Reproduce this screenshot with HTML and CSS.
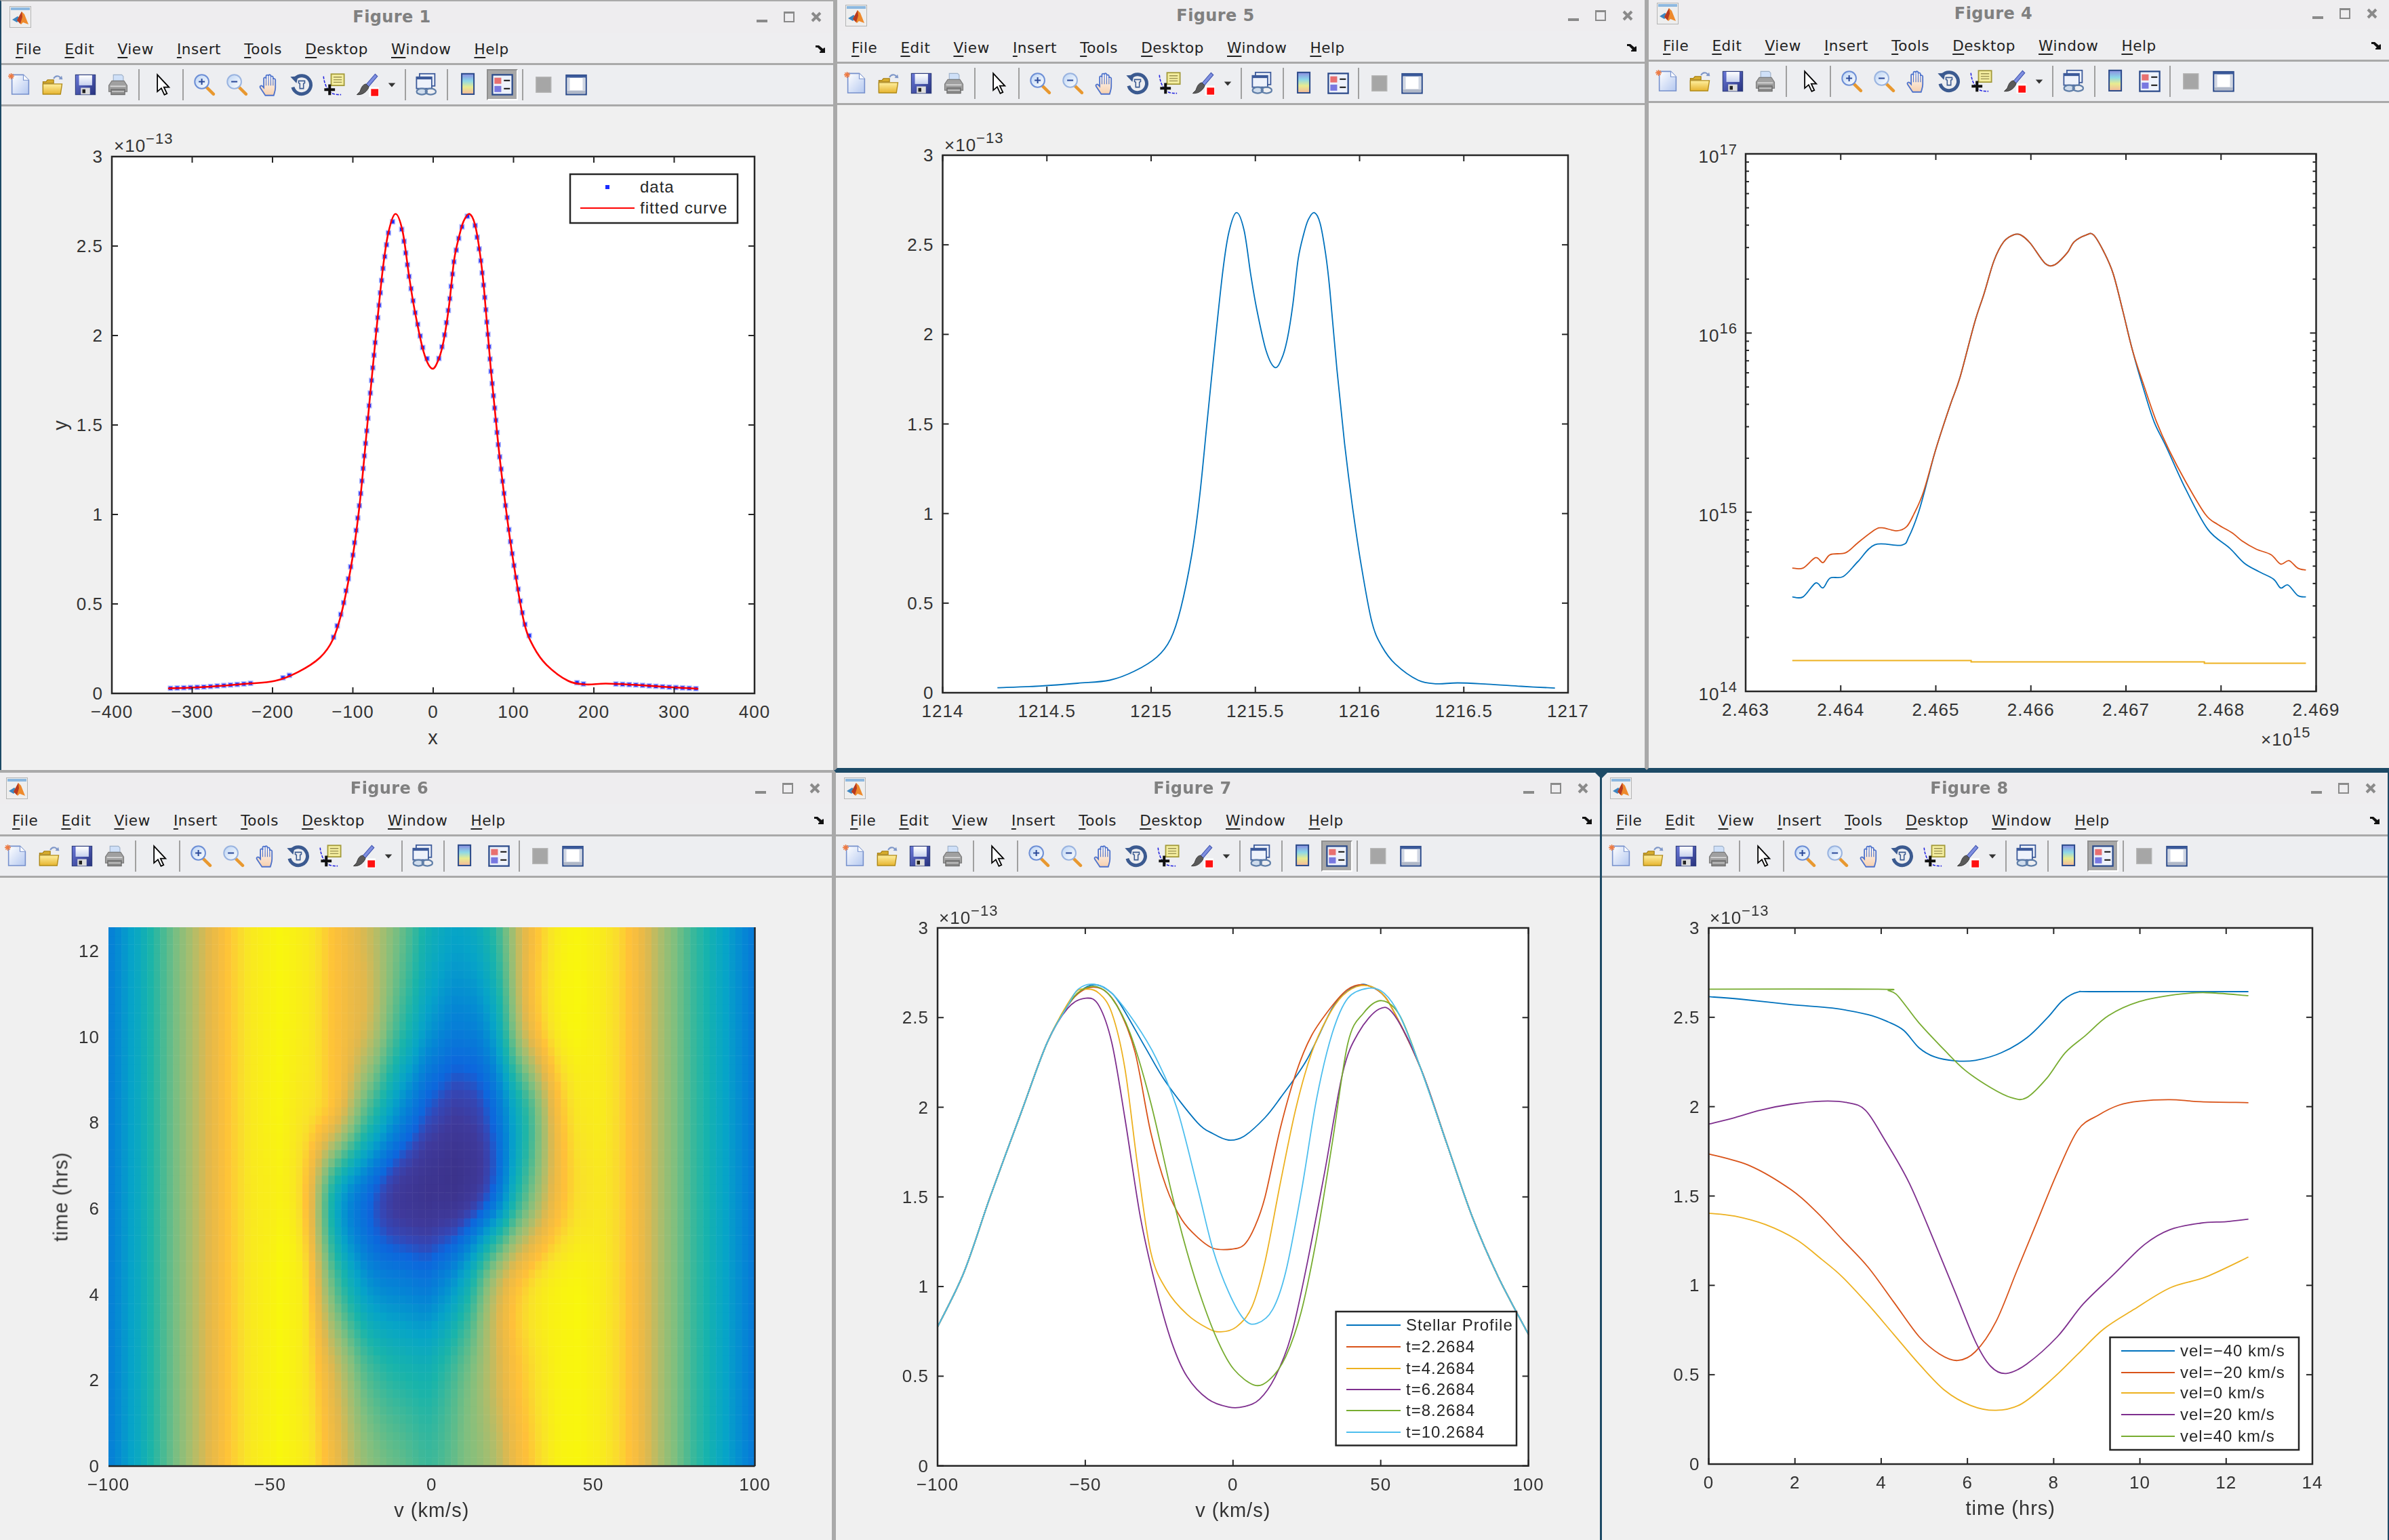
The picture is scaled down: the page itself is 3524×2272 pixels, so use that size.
FILE: index.html
```html
<!DOCTYPE html>
<html lang="en">
<head>
  <meta charset="UTF-8">
  <title>MATLAB figures</title>
  <link rel="stylesheet" href="styles.css">
</head>
<body>
  <!-- shared toolbar and window icons, drawn on a 16 unit grid -->
  <svg class="defs" aria-hidden="true">
    <defs>
      <linearGradient id="g-page" x1="0" y1="0" x2="1" y2="1"><stop offset="0" stop-color="#ffffff"/><stop offset="1" stop-color="#b4c8f0"/></linearGradient>
      <linearGradient id="g-folder" x1="0" y1="0" x2="0" y2="1"><stop offset="0" stop-color="#fff0a0"/><stop offset="1" stop-color="#e6b430"/></linearGradient>
      <linearGradient id="g-disk" x1="0" y1="0" x2="1" y2="1"><stop offset="0" stop-color="#6a78d8"/><stop offset="1" stop-color="#27327e"/></linearGradient>
      <linearGradient id="g-label" x1="0" y1="0" x2="0" y2="1"><stop offset="0" stop-color="#ffffff"/><stop offset="1" stop-color="#c8d2ee"/></linearGradient>
      <linearGradient id="g-lens" x1="0" y1="0" x2="1" y2="1"><stop offset="0" stop-color="#bcd4f4"/><stop offset="1" stop-color="#ffffff"/></linearGradient>
      <linearGradient id="g-hand" x1="0" y1="0" x2="0" y2="1"><stop offset="0" stop-color="#ffffff"/><stop offset="1" stop-color="#f6cfae"/></linearGradient>
      <linearGradient id="g-bar" x1="0" y1="0" x2="0" y2="1"><stop offset="0" stop-color="#8a8ce0"/><stop offset=".35" stop-color="#8cd8e8"/><stop offset=".65" stop-color="#e8ec90"/><stop offset="1" stop-color="#f4b89a"/></linearGradient>

      <symbol id="matlab" viewBox="0 0 32 32">
        <rect x=".5" y=".5" width="31" height="31" fill="#eeeeee" stroke="#b4b4b4"/>
        <rect x="2" y="2" width="28" height="4" fill="#8cb8e0"/>
        <path d="M4 20l8-5 5 4-6 5z" fill="#3d85c0"/>
        <path d="M18 8l-7 13 6 6 3-3 8 3-6-15z" fill="#ee8a2c"/>
        <path d="M18 8l-7 13 5 5 3-10z" fill="#b83a20"/>
      </symbol>
      <symbol id="i-undock" viewBox="0 0 14 14">
        <path d="M0 2h5l6 5 1.500-1.500H14V13H6v-1.500l2-1.500-5-5H0z" fill="#111"/>
      </symbol>
      <symbol id="i-close" viewBox="0 0 16 16">
        <path d="M2 2l12 12M14 2L2 14" stroke="#8a8a8a" stroke-width="4"/>
      </symbol>
      <symbol id="i-new" viewBox="0 0 16 16">
        <path d="M2.500 1.500H10L13.500 5v9.200H2.500z" fill="url(#g-page)" stroke="#7690cc" stroke-width=".7"/>
        <path d="M10 1.500V5h3.500" fill="#ffffff" stroke="#7690cc" stroke-width=".5"/>
        <path d="M2 .4v4M0 2.400h4M.6 1l2.800 2.800M3.400 1L.6 3.800" stroke="#ee7a42" stroke-width=".7"/>
      </symbol>
      <symbol id="i-open" viewBox="0 0 16 16">
        <path d="M1.500 14V6h2l1-1.200h4V7h-7" fill="#d6ac2e" stroke="#a07a10" stroke-width=".5"/>
        <path d="M1.500 7.500h12.500l-1 6.700H1.500z" fill="url(#g-folder)" stroke="#b08a18" stroke-width=".6"/>
        <path d="M8.500 4C9.500 2 12 1.800 13 3.700" fill="none" stroke="#7f97c8" stroke-width=".9"/>
        <path d="M11.800 4.400l2.600.2-.6-2.500z" fill="#7f97c8"/>
      </symbol>
      <symbol id="i-save" viewBox="0 0 16 16">
        <rect x="1.500" y="1.500" width="13" height="13" fill="url(#g-disk)" stroke="#2b3a7a" stroke-width=".5"/>
        <rect x="3.800" y="1.800" width="8.600" height="6.600" fill="url(#g-label)"/>
        <rect x="5" y="10" width="6" height="4.400" fill="#dddddd"/>
        <rect x="6" y="11" width="2" height="2.500" fill="#222222"/>
      </symbol>
      <symbol id="i-print" viewBox="0 0 16 16">
        <path d="M5 5.500V1.500h5.500l1 1v3z" fill="#cfe0f8" stroke="#9db0c8" stroke-width=".5"/>
        <path d="M2 8.500l2-3h8l2 3v4H2z" fill="#a0a0a0" stroke="#7a7a7a" stroke-width=".5"/>
        <rect x="3.500" y="11" width="9" height="3.500" fill="#8a8a8a" stroke="#686868" stroke-width=".5"/>
        <path d="M3 9h10M4 12.500h8" stroke="#dddddd" stroke-width=".6"/>
      </symbol>
      <symbol id="i-arrow" viewBox="0 0 16 16">
        <path d="M4.500 1.500v11l2.600-2.200 2 4.300 1.700-.8-2-4.200h3.300z" fill="#ffffff" stroke="#000000" stroke-width=".8"/>
      </symbol>
      <symbol id="i-zoomin" viewBox="0 0 16 16">
        <path d="M9.800 9.800l4.400 4.400" stroke="#e8982f" stroke-width="2" stroke-linecap="round"/>
        <circle cx="6.500" cy="6" r="4.600" fill="url(#g-lens)" stroke="#6d8fd6" stroke-width=".9"/>
        <path d="M4.500 6h4M6.500 4v4" stroke="#2c4a9a" stroke-width=".9"/>
      </symbol>
      <symbol id="i-zoomout" viewBox="0 0 16 16">
        <path d="M9.800 9.800l4.400 4.400" stroke="#e8982f" stroke-width="2" stroke-linecap="round"/>
        <circle cx="6.500" cy="6" r="4.600" fill="url(#g-lens)" stroke="#9ab4e0" stroke-width=".9"/>
        <path d="M4.500 6h4" stroke="#2c4a9a" stroke-width=".9"/>
      </symbol>
      <symbol id="i-hand" viewBox="0 0 16 16">
        <path d="M5.500 15L2.200 10C1.600 8.800 2.800 8.200 3.600 9l.9 1V4c0-1 1.400-1 1.500 0V2.400c0-1 1.500-1 1.600 0V2.200c0-1 1.400-1 1.500 0V3c0-.8 1.400-.8 1.500.2v1.400c0-.8 1.400-.8 1.500.2V10c0 2-.6 3.200-1.100 5z" fill="url(#g-hand)" stroke="#4d72cc" stroke-width=".8"/>
        <path d="M6 4v4.500M7.600 2.500v6M9.100 3v5.500M10.600 4.500v4" stroke="#4d72cc" stroke-width=".5" fill="none"/>
      </symbol>
      <symbol id="i-rotate" viewBox="0 0 16 16">
        <path d="M3.600 4A6 6 0 1 1 2.200 9.600" fill="none" stroke="#3b5a90" stroke-width="2.200"/>
        <path d="M.6 2.800l5-.4-1 4.600z" fill="#3b5a90"/>
        <path d="M6 5.500h4v1.400l-.8.3v3.300H6.800V7.200L6 6.900z" fill="none" stroke="#3b5a90" stroke-width=".7"/>
      </symbol>
      <symbol id="i-tip" viewBox="0 0 16 16">
        <path d="M1 2.500c.3 4 2 8 4 10s5 2 7.500 2" fill="none" stroke="#2020e0" stroke-width=".7" stroke-dasharray="1.800 .8"/>
        <rect x="6" y="1" width="8.500" height="7.500" fill="#f4eea0" stroke="#a39a3a" stroke-width=".8"/>
        <path d="M7.500 3h5.500M7.500 4.700h5.500M7.500 6.400h5.500" stroke="#999050" stroke-width=".6"/>
        <path d="M1.500 11.200h7M5 7.800v7" stroke="#111111" stroke-width="1.800"/>
      </symbol>
      <symbol id="i-brush" viewBox="0 0 16 16">
        <path d="M13.500 1L7.500 8 9 9.500l6-7z" fill="#7f8fe0" stroke="#4055b0" stroke-width=".5"/>
        <path d="M7.500 7.500C5 8 4.500 10 3.500 12.500L1.500 14.500c3 .3 6-1 8-5z" fill="#5a5a5a" stroke="#333333" stroke-width=".4"/>
        <rect x="9.500" y="9.500" width="6.500" height="6.500" fill="#ffffff"/>
        <rect x="10.800" y="10.800" width="4.800" height="4.600" fill="#ff1010"/>
      </symbol>
      <symbol id="i-drop" viewBox="0 0 16 16">
        <path d="M2 5h12l-6 7z" fill="#333333"/>
      </symbol>
      <symbol id="i-link" viewBox="0 0 16 16">
        <rect x="3.500" y=".8" width="10" height="8" fill="#eef2fb" stroke="#3c5a9a" stroke-width=".8"/>
        <rect x="1.500" y="3" width="10" height="7.500" fill="#eef2fb" stroke="#3c5a9a" stroke-width=".8"/>
        <rect x="1.500" y="3" width="10" height="1.500" fill="#3c5a9a"/>
        <ellipse cx="5" cy="12.500" rx="3.400" ry="2" fill="#cfdcec" stroke="#5f7ea8" stroke-width="1"/>
        <ellipse cx="10.800" cy="12.500" rx="3.400" ry="2" fill="none" stroke="#5f7ea8" stroke-width="1"/>
      </symbol>
      <symbol id="i-bar" viewBox="0 0 16 16">
        <rect x="3.600" y=".8" width="8" height="13.400" fill="url(#g-bar)" stroke="#2b4a8a" stroke-width=".9"/>
      </symbol>
      <symbol id="i-legend" viewBox="0 0 16 16">
        <rect x="1.500" y="1.500" width="13" height="13" fill="#eef2fb" stroke="#2b4a8a" stroke-width="1"/>
        <rect x="2.800" y="3.400" width="4.500" height="4" fill="#e87070"/>
        <rect x="2.800" y="8.800" width="4.500" height="4" fill="#7878e0"/>
        <path d="M9 5.200h4M9 10.600h4" stroke="#111111" stroke-width=".9"/>
      </symbol>
      <symbol id="i-hide" viewBox="0 0 16 16">
        <rect x="3" y="3" width="9.800" height="10" fill="#a6a6a6" stroke="#b4b4b4" stroke-width=".6"/>
      </symbol>
      <symbol id="i-dock" viewBox="0 0 16 16">
        <rect x="1.500" y="1.800" width="13" height="12.600" fill="#ffffff" stroke="#2b4a8a" stroke-width="1"/>
        <rect x="1.500" y="1.800" width="13" height="1.600" fill="#3b5a9a"/>
        <rect x="2" y="11.800" width="12" height="2.200" fill="#b0b8c8"/>
        <rect x="2" y="3.400" width="1.800" height="8.400" fill="#d0d6e2"/>
        <rect x="12.200" y="3.400" width="1.800" height="8.400" fill="#d0d6e2"/>
      </symbol>
    </defs>
  </svg>

  <main class="desktop">
    <div class="row">
      <section class="win win-first">
        <header class="titlebar">
          <svg class="logo"><use href="#matlab"/></svg>
          <h2>Figure 1</h2>
          <div class="wm"><i class="wm-min"></i><i class="wm-max"></i><svg class="wm-close"><use href="#i-close"/></svg></div>
        </header>
        <nav class="menubar">
          <a><u>F</u>ile</a><a><u>E</u>dit</a><a><u>V</u>iew</a><a><u>I</u>nsert</a><a><u>T</u>ools</a><a><u>D</u>esktop</a><a><u>W</u>indow</a><a><u>H</u>elp</a>
          <svg class="undock"><use href="#i-undock"/></svg>
        </nav>
        <div class="toolbar">
          <span class="tool"><svg><use href="#i-new"/></svg></span><span class="tool"><svg><use href="#i-open"/></svg></span><span class="tool"><svg><use href="#i-save"/></svg></span><span class="tool"><svg><use href="#i-print"/></svg></span>
          <b class="sep"></b>
          <span class="tool tool-arrow"><svg><use href="#i-arrow"/></svg></span>
          <b class="sep"></b>
          <span class="tool"><svg><use href="#i-zoomin"/></svg></span><span class="tool"><svg><use href="#i-zoomout"/></svg></span><span class="tool"><svg><use href="#i-hand"/></svg></span><span class="tool"><svg><use href="#i-rotate"/></svg></span><span class="tool"><svg><use href="#i-tip"/></svg></span><span class="tool"><svg><use href="#i-brush"/></svg></span><span class="tool tool-drop"><svg><use href="#i-drop"/></svg></span>
          <b class="sep"></b>
          <span class="tool"><svg><use href="#i-link"/></svg></span>
          <b class="sep"></b>
          <span class="tool"><svg><use href="#i-bar"/></svg></span><span class="tool tool-legend on"><svg><use href="#i-legend"/></svg></span>
          <b class="sep"></b>
          <span class="tool"><svg><use href="#i-hide"/></svg></span><span class="tool"><svg><use href="#i-dock"/></svg></span>
        </div>
        <svg class="figure" id="fig1"></svg>
      </section>

      <section class="win win-5">
        <header class="titlebar">
          <svg class="logo"><use href="#matlab"/></svg>
          <h2>Figure 5</h2>
          <div class="wm"><i class="wm-min"></i><i class="wm-max"></i><svg class="wm-close"><use href="#i-close"/></svg></div>
        </header>
        <nav class="menubar">
          <a><u>F</u>ile</a><a><u>E</u>dit</a><a><u>V</u>iew</a><a><u>I</u>nsert</a><a><u>T</u>ools</a><a><u>D</u>esktop</a><a><u>W</u>indow</a><a><u>H</u>elp</a>
          <svg class="undock"><use href="#i-undock"/></svg>
        </nav>
        <div class="toolbar">
          <span class="tool"><svg><use href="#i-new"/></svg></span><span class="tool"><svg><use href="#i-open"/></svg></span><span class="tool"><svg><use href="#i-save"/></svg></span><span class="tool"><svg><use href="#i-print"/></svg></span>
          <b class="sep"></b>
          <span class="tool tool-arrow"><svg><use href="#i-arrow"/></svg></span>
          <b class="sep"></b>
          <span class="tool"><svg><use href="#i-zoomin"/></svg></span><span class="tool"><svg><use href="#i-zoomout"/></svg></span><span class="tool"><svg><use href="#i-hand"/></svg></span><span class="tool"><svg><use href="#i-rotate"/></svg></span><span class="tool"><svg><use href="#i-tip"/></svg></span><span class="tool"><svg><use href="#i-brush"/></svg></span><span class="tool tool-drop"><svg><use href="#i-drop"/></svg></span>
          <b class="sep"></b>
          <span class="tool"><svg><use href="#i-link"/></svg></span>
          <b class="sep"></b>
          <span class="tool"><svg><use href="#i-bar"/></svg></span><span class="tool tool-legend"><svg><use href="#i-legend"/></svg></span>
          <b class="sep"></b>
          <span class="tool"><svg><use href="#i-hide"/></svg></span><span class="tool"><svg><use href="#i-dock"/></svg></span>
        </div>
        <svg class="figure" id="fig5"></svg>
      </section>

      <section class="win win-4">
        <header class="titlebar">
          <svg class="logo"><use href="#matlab"/></svg>
          <h2>Figure 4</h2>
          <div class="wm"><i class="wm-min"></i><i class="wm-max"></i><svg class="wm-close"><use href="#i-close"/></svg></div>
        </header>
        <nav class="menubar">
          <a><u>F</u>ile</a><a><u>E</u>dit</a><a><u>V</u>iew</a><a><u>I</u>nsert</a><a><u>T</u>ools</a><a><u>D</u>esktop</a><a><u>W</u>indow</a><a><u>H</u>elp</a>
          <svg class="undock"><use href="#i-undock"/></svg>
        </nav>
        <div class="toolbar">
          <span class="tool"><svg><use href="#i-new"/></svg></span><span class="tool"><svg><use href="#i-open"/></svg></span><span class="tool"><svg><use href="#i-save"/></svg></span><span class="tool"><svg><use href="#i-print"/></svg></span>
          <b class="sep"></b>
          <span class="tool tool-arrow"><svg><use href="#i-arrow"/></svg></span>
          <b class="sep"></b>
          <span class="tool"><svg><use href="#i-zoomin"/></svg></span><span class="tool"><svg><use href="#i-zoomout"/></svg></span><span class="tool"><svg><use href="#i-hand"/></svg></span><span class="tool"><svg><use href="#i-rotate"/></svg></span><span class="tool"><svg><use href="#i-tip"/></svg></span><span class="tool"><svg><use href="#i-brush"/></svg></span><span class="tool tool-drop"><svg><use href="#i-drop"/></svg></span>
          <b class="sep"></b>
          <span class="tool"><svg><use href="#i-link"/></svg></span>
          <b class="sep"></b>
          <span class="tool"><svg><use href="#i-bar"/></svg></span><span class="tool tool-legend"><svg><use href="#i-legend"/></svg></span>
          <b class="sep"></b>
          <span class="tool"><svg><use href="#i-hide"/></svg></span><span class="tool"><svg><use href="#i-dock"/></svg></span>
        </div>
        <svg class="figure" id="fig4"></svg>
      </section>
    </div>

    <div class="row row-lower">
      <section class="win win-6">
        <header class="titlebar">
          <svg class="logo"><use href="#matlab"/></svg>
          <h2>Figure 6</h2>
          <div class="wm"><i class="wm-min"></i><i class="wm-max"></i><svg class="wm-close"><use href="#i-close"/></svg></div>
        </header>
        <nav class="menubar">
          <a><u>F</u>ile</a><a><u>E</u>dit</a><a><u>V</u>iew</a><a><u>I</u>nsert</a><a><u>T</u>ools</a><a><u>D</u>esktop</a><a><u>W</u>indow</a><a><u>H</u>elp</a>
          <svg class="undock"><use href="#i-undock"/></svg>
        </nav>
        <div class="toolbar">
          <span class="tool"><svg><use href="#i-new"/></svg></span><span class="tool"><svg><use href="#i-open"/></svg></span><span class="tool"><svg><use href="#i-save"/></svg></span><span class="tool"><svg><use href="#i-print"/></svg></span>
          <b class="sep"></b>
          <span class="tool tool-arrow"><svg><use href="#i-arrow"/></svg></span>
          <b class="sep"></b>
          <span class="tool"><svg><use href="#i-zoomin"/></svg></span><span class="tool"><svg><use href="#i-zoomout"/></svg></span><span class="tool"><svg><use href="#i-hand"/></svg></span><span class="tool"><svg><use href="#i-rotate"/></svg></span><span class="tool"><svg><use href="#i-tip"/></svg></span><span class="tool"><svg><use href="#i-brush"/></svg></span><span class="tool tool-drop"><svg><use href="#i-drop"/></svg></span>
          <b class="sep"></b>
          <span class="tool"><svg><use href="#i-link"/></svg></span>
          <b class="sep"></b>
          <span class="tool"><svg><use href="#i-bar"/></svg></span><span class="tool tool-legend"><svg><use href="#i-legend"/></svg></span>
          <b class="sep"></b>
          <span class="tool"><svg><use href="#i-hide"/></svg></span><span class="tool"><svg><use href="#i-dock"/></svg></span>
        </div>
        <svg class="figure" id="fig6"></svg>
      </section>

      <section class="win win-7">
        <i class="notch"></i>
        <header class="titlebar">
          <svg class="logo"><use href="#matlab"/></svg>
          <h2>Figure 7</h2>
          <div class="wm"><i class="wm-min"></i><i class="wm-max"></i><svg class="wm-close"><use href="#i-close"/></svg></div>
        </header>
        <nav class="menubar">
          <a><u>F</u>ile</a><a><u>E</u>dit</a><a><u>V</u>iew</a><a><u>I</u>nsert</a><a><u>T</u>ools</a><a><u>D</u>esktop</a><a><u>W</u>indow</a><a><u>H</u>elp</a>
          <svg class="undock"><use href="#i-undock"/></svg>
        </nav>
        <div class="toolbar">
          <span class="tool"><svg><use href="#i-new"/></svg></span><span class="tool"><svg><use href="#i-open"/></svg></span><span class="tool"><svg><use href="#i-save"/></svg></span><span class="tool"><svg><use href="#i-print"/></svg></span>
          <b class="sep"></b>
          <span class="tool tool-arrow"><svg><use href="#i-arrow"/></svg></span>
          <b class="sep"></b>
          <span class="tool"><svg><use href="#i-zoomin"/></svg></span><span class="tool"><svg><use href="#i-zoomout"/></svg></span><span class="tool"><svg><use href="#i-hand"/></svg></span><span class="tool"><svg><use href="#i-rotate"/></svg></span><span class="tool"><svg><use href="#i-tip"/></svg></span><span class="tool"><svg><use href="#i-brush"/></svg></span><span class="tool tool-drop"><svg><use href="#i-drop"/></svg></span>
          <b class="sep"></b>
          <span class="tool"><svg><use href="#i-link"/></svg></span>
          <b class="sep"></b>
          <span class="tool"><svg><use href="#i-bar"/></svg></span><span class="tool tool-legend on"><svg><use href="#i-legend"/></svg></span>
          <b class="sep"></b>
          <span class="tool"><svg><use href="#i-hide"/></svg></span><span class="tool"><svg><use href="#i-dock"/></svg></span>
        </div>
        <svg class="figure" id="fig7"></svg>
      </section>

      <section class="win win-8">
        <header class="titlebar">
          <svg class="logo"><use href="#matlab"/></svg>
          <h2>Figure 8</h2>
          <div class="wm"><i class="wm-min"></i><i class="wm-max"></i><svg class="wm-close"><use href="#i-close"/></svg></div>
        </header>
        <nav class="menubar">
          <a><u>F</u>ile</a><a><u>E</u>dit</a><a><u>V</u>iew</a><a><u>I</u>nsert</a><a><u>T</u>ools</a><a><u>D</u>esktop</a><a><u>W</u>indow</a><a><u>H</u>elp</a>
          <svg class="undock"><use href="#i-undock"/></svg>
        </nav>
        <div class="toolbar">
          <span class="tool"><svg><use href="#i-new"/></svg></span><span class="tool"><svg><use href="#i-open"/></svg></span><span class="tool"><svg><use href="#i-save"/></svg></span><span class="tool"><svg><use href="#i-print"/></svg></span>
          <b class="sep"></b>
          <span class="tool tool-arrow"><svg><use href="#i-arrow"/></svg></span>
          <b class="sep"></b>
          <span class="tool"><svg><use href="#i-zoomin"/></svg></span><span class="tool"><svg><use href="#i-zoomout"/></svg></span><span class="tool"><svg><use href="#i-hand"/></svg></span><span class="tool"><svg><use href="#i-rotate"/></svg></span><span class="tool"><svg><use href="#i-tip"/></svg></span><span class="tool"><svg><use href="#i-brush"/></svg></span><span class="tool tool-drop"><svg><use href="#i-drop"/></svg></span>
          <b class="sep"></b>
          <span class="tool"><svg><use href="#i-link"/></svg></span>
          <b class="sep"></b>
          <span class="tool"><svg><use href="#i-bar"/></svg></span><span class="tool tool-legend on"><svg><use href="#i-legend"/></svg></span>
          <b class="sep"></b>
          <span class="tool"><svg><use href="#i-hide"/></svg></span><span class="tool"><svg><use href="#i-dock"/></svg></span>
        </div>
        <svg class="figure" id="fig8"></svg>
      </section>
    </div>
  </main>

  <script src="plots.js"></script>
</body>
</html>
```

FILE: styles.css
```css
html, body {
  margin: 0;
  width: 3524px;
  height: 2272px;
  overflow: hidden;
  background-color: #1d4a66;
}

.defs {
  position: absolute;
  width: 0;
  height: 0;
}

.desktop {
  display: flex;
  flex-direction: column;
  filter: blur(0.6px);
}

.row {
  display: flex;
  height: 1136px;
}

.row-lower {
  padding-top: 2px;
}

/* Windows */
.win {
  position: relative;
  display: flex;
  flex-direction: column;
  box-sizing: border-box;
  background-color: #f0f0f0;
  border: solid #a9a9a9;
  border-width: 2px 3px 0 3px;
}

.win-first { width: 1232px; border-left: 2px solid #1d4a66; }
.win-5 { width: 1197px; margin-top: -2px; border-bottom: 3px solid #1d4a66; }
.win-4 { width: 1095px; margin-top: -5px; border-right: none; border-bottom: 3px solid #1d4a66; }
.win-6 { width: 1236px; margin-top: -2px; margin-left: -6px; border-top-width: 4px; }
.win-7 { width: 1133px; margin-top: -2px; border-top: 4px solid #1d4a66; border-right: 3px solid #1d4a66; }
.win-8 { width: 1159px; margin-top: -2px; border-top: 4px solid #1d4a66; border-left: none; border-right: none; }

.notch {
  position: absolute;
  top: -2px;
  right: -13px;
  border: solid transparent;
  border-width: 11px 11px 0;
  border-top-color: #1d4a66;
  z-index: 2;
}

/* Title bar */
.titlebar {
  display: flex;
  align-items: center;
  height: 46px;
  padding: 0 17px 0 12px;
  background-color: #eeedef;
}

.logo {
  width: 32px;
  height: 32px;
  flex: none;
}

.titlebar h2 {
  flex: 1;
  margin: 0;
  padding-right: 6px;
  text-align: center;
  font: bold 24px "DejaVu Sans", sans-serif;
  letter-spacing: 0.4px;
  color: #808080;
}

.wm {
  display: flex;
  align-items: flex-end;
  gap: 24px;
  height: 16px;
}

.wm-min {
  width: 16px;
  height: 4px;
  background-color: #8a8a8a;
}

.wm-max {
  box-sizing: border-box;
  width: 16px;
  height: 16px;
  border: 2px solid #8a8a8a;
  border-top-width: 3px;
}

.wm-close {
  width: 16px;
  height: 16px;
}

/* Menu bar */
.menubar {
  display: flex;
  align-items: center;
  gap: 34px;
  height: 42px;
  padding: 3px 12px 0 21px;
  background-color: #eeeef0;
  border-bottom: 3px solid #a9a9a9;
  font: 21.5px "DejaVu Sans", sans-serif;
  letter-spacing: 0.6px;
  color: #222222;
}

.menubar u {
  text-decoration-thickness: 2px;
  text-underline-offset: 4px;
}

.undock {
  width: 14px;
  height: 14px;
  margin-left: auto;
}

/* Tool bar */
.toolbar {
  display: flex;
  align-items: center;
  height: 58px;
  padding-left: 4px;
  background-color: #edeef1;
  border-bottom: 3px solid #a9a9a9;
}

.tool {
  display: flex;
  align-items: center;
  justify-content: center;
  flex: none;
  width: 48px;
  height: 46px;
}

.tool svg {
  width: 36px;
  height: 36px;
}

.tool-arrow {
  width: 46px;
  margin-left: 5px;
}

.tool-drop {
  width: 26px;
}

.tool-drop svg {
  width: 14px;
  height: 14px;
}

.tool-legend {
  box-sizing: border-box;
  width: 46px;
  margin-left: 3px;
  border: 2px solid transparent;
}

.tool-legend.on {
  background-color: #a8a8a8;
  border-color: #8f8f8f #ffffff #ffffff #8f8f8f;
}

.sep {
  flex: none;
  width: 2px;
  height: 46px;
  margin: 0 6px;
  background-color: #a0a0a0;
}

/* Plots */
.figure {
  display: block;
  flex: 1;
  width: 100%;
  min-height: 0;
}

.figure text {
  font: 26px "Liberation Sans", Arial, sans-serif;
  letter-spacing: 1px;
  fill: #333333;
}

.figure text.label {
  font-size: 29px;
}

.figure text.key {
  font-size: 24px;
  fill: #262626;
}

.figure tspan.sup {
  font-size: 22px;
}
```

FILE: plots.js
```javascript
const NS = 'http://www.w3.org/2000/svg';
const INK = '#262626';
const BLUE = '#0072bd', ORANGE = '#d95319', YELLOW = '#edb120',
      PURPLE = '#7e2f8e', GREEN = '#77ac30', CYAN = '#4dbeee';

const add = (parent, tag, attrs, text) => {
  const node = document.createElementNS(NS, tag);
  Object.keys(attrs).forEach(key => node.setAttribute(key, attrs[key]));
  if (text !== undefined) node.textContent = text;
  parent.appendChild(node);
  return node;
};

const range = (from, to, step) => {
  const out = [];
  for (let i = 0; from + i * step <= to + 1e-9; i++) out.push(from + i * step);
  return out;
};

const minus = value => String(value).replace('-', '\u2212');

// Catmull-Rom through the traced points
const smoothPath = pts => {
  let d = `M${pts[0][0].toFixed(1)} ${pts[0][1].toFixed(1)}`;
  for (let i = 0; i < pts.length - 1; i++) {
    const p0 = pts[Math.max(i - 1, 0)], p1 = pts[i], p2 = pts[i + 1], p3 = pts[Math.min(i + 2, pts.length - 1)];
    const c1 = [p1[0] + (p2[0] - p0[0]) / 6, p1[1] + (p2[1] - p0[1]) / 6];
    const c2 = [p2[0] - (p3[0] - p1[0]) / 6, p2[1] - (p3[1] - p1[1]) / 6];
    d += `C${c1[0].toFixed(1)} ${c1[1].toFixed(1)} ${c2[0].toFixed(1)} ${c2[1].toFixed(1)} ${p2[0].toFixed(1)} ${p2[1].toFixed(1)}`;
  }
  return d;
};

// Draws one axes in page coordinates. draw(ax) paints the data between background and frame.
const plot = (id, cfg, draw) => {
  const svg = document.getElementById(id);
  const rect = svg.getBoundingClientRect();
  svg.setAttribute('viewBox', `${rect.left} ${rect.top} ${rect.width} ${rect.height}`);
  const [left, top, right, bottom] = cfg.box;
  const ax = {
    svg,
    X: f => left + f * (right - left),
    Y: f => bottom - f * (bottom - top),
    fx: x => (x - cfg.xlim[0]) / (cfg.xlim[1] - cfg.xlim[0]),
    fy: y => (y - cfg.ylim[0]) / (cfg.ylim[1] - cfg.ylim[0]),
  };
  ax.line = (fracs, color, width = 1.800) => add(svg, 'path', {
    d: smoothPath(fracs.map(p => [ax.X(p[0]), ax.Y(p[1])])), fill: 'none', stroke: color, 'stroke-width': width,
  });

  add(svg, 'rect', { x: left, y: top, width: right - left, height: bottom - top, fill: '#ffffff' });
  draw(ax);

  const seg = (x1, y1, x2, y2, width = 2) => add(svg, 'line', { x1, y1, x2, y2, stroke: INK, 'stroke-width': width });

  if (cfg.heat) {
    seg(left, bottom, right, bottom, 2.500);
    seg(right, top, right, bottom, 2.500);
  } else {
    add(svg, 'rect', { x: left, y: top, width: right - left, height: bottom - top, fill: 'none', stroke: INK, 'stroke-width': 2.500 });
    cfg.xticks.forEach(x => {
      const px = ax.X(ax.fx(x));
      seg(px, bottom, px, bottom - 9);
      seg(px, top, px, top + 9);
    });
    cfg.yticks.forEach(y => {
      const py = ax.Y(ax.fy(y));
      seg(left, py, left + 9, py);
      seg(right, py, right - 9, py);
    });
    (cfg.minor || []).forEach(y => {
      const py = ax.Y(ax.fy(y));
      seg(left, py, left + 5, py);
      seg(right, py, right - 5, py);
    });
  }

  cfg.xticks.forEach(x => {
    add(svg, 'text', { x: ax.X(ax.fx(x)), y: bottom + 36, 'text-anchor': 'middle' }, cfg.xfmt ? cfg.xfmt(x) : minus(x));
  });
  cfg.yticks.forEach(y => {
    const py = ax.Y(ax.fy(y));
    if (cfg.log) {
      const t = add(svg, 'text', { x: left - 12, y: py + 13, 'text-anchor': 'end' }, '10');
      add(t, 'tspan', { class: 'sup', dy: -12 }, String(y));
    } else {
      add(svg, 'text', { x: left - 13, y: py + 9, 'text-anchor': 'end' }, minus(y));
    }
  });

  if (cfg.xlabel) add(svg, 'text', { class: 'label', x: (left + right) / 2, y: bottom + 75, 'text-anchor': 'middle' }, cfg.xlabel);
  if (cfg.ylabel) {
    const cy = (top + bottom) / 2;
    add(svg, 'text', { class: 'label', x: 99, y: cy, 'text-anchor': 'middle', transform: `rotate(-90 99 ${cy})` }, cfg.ylabel);
  }
  if (cfg.exp) {
    const t = add(svg, 'text', { x: cfg.exp.x, y: cfg.exp.y }, '\u00d710');
    add(t, 'tspan', { class: 'sup', dy: -12 }, cfg.exp.text);
  }

  if (cfg.legend) {
    const { box, rows, line, textX } = cfg.legend;
    add(svg, 'rect', { x: box[0], y: box[1], width: box[2] - box[0], height: box[3] - box[1], fill: '#ffffff', stroke: INK, 'stroke-width': 2.500 });
    rows.forEach(row => {
      if (row.dot) {
        add(svg, 'rect', { x: (line[0] + line[1]) / 2 - 3, y: row.y - 3, width: 6, height: 6, fill: '#1a2cff' });
      } else {
        add(svg, 'line', { x1: line[0], y1: row.y, x2: line[1], y2: row.y, stroke: row.color, 'stroke-width': 2 });
      }
      add(svg, 'text', { class: 'key', x: textX, y: row.y + 8 }, row.text);
    });
  }
  return ax;
};

// Stellar line profile: velocity (km/s), flux (1e-13)
const PROFILE = [
  [-330, .028], [-285, .036], [-235, .053], [-197, .07], [-168, .12], [-141, .2], [-125, .3], [-113, .47], [-100, .77],
  [-91, 1.08], [-82, 1.5], [-72, 1.97], [-63, 2.36], [-56, 2.57], [-47, 2.68], [-38, 2.58], [-30, 2.33], [-23, 2.14],
  [-12, 1.91], [-1.5, 1.815], [7, 1.87], [13.4, 1.98], [19.8, 2.17], [26, 2.42], [32.6, 2.56], [38, 2.64], [45, 2.68],
  [52, 2.62], [58.5, 2.45], [63.5, 2.25], [72, 1.8], [81, 1.39], [90, 1.05], [100, .73], [113, .4], [125, .26], [141, .16],
  [168, .07], [190, .05], [215, .055], [250, .048], [290, .036], [330, .026],
];

const profileAt = v => {
  if (v <= PROFILE[0][0]) return PROFILE[0][1];
  for (let i = 1; i < PROFILE.length; i++) {
    if (v <= PROFILE[i][0]) {
      const a = PROFILE[i - 1], b = PROFILE[i];
      return a[1] + (b[1] - a[1]) * (v - a[0]) / (b[0] - a[0]);
    }
  }
  return PROFILE[PROFILE.length - 1][1];
};

// Curves were traced off the plots: convert to axes fractions with the traced frame
const trace = (pts, [x0, x1, y0, y1]) => pts.map(([x, y]) => [(x - x0) / (x1 - x0), (y0 - y) / (y0 - y1)]);

// Figure 1: data points and fit
plot('fig1', {
  box: [165, 231, 1113, 1023], xlim: [-400, 400], ylim: [0, 3],
  xticks: range(-400, 400, 100), yticks: range(0, 3, .5),
  xlabel: 'x', ylabel: 'y', exp: { x: 168, y: 224, text: '\u221213' },
  legend: {
    box: [841, 257, 1088, 329], line: [856, 936], textX: 944,
    rows: [{ y: 276, dot: true, text: 'data' }, { y: 307, color: '#ff0000', text: 'fitted curve' }],
  },
}, ax => {
  const dots = [];
  const wings = [...range(-327, -220, 8.3), -187, -179];
  wings.forEach(v => dots.push(v, -v));
  // the data are evenly spaced along the curve between the wings
  let lastX = null, lastY = null;
  for (let v = -124; v <= 124; v += .1) {
    const x = ax.X(ax.fx(v)), y = ax.Y(ax.fy(profileAt(v)));
    if (lastX === null || Math.hypot(x - lastX, y - lastY) >= 17.5) {
      dots.push(v);
      lastX = x;
      lastY = y;
    }
  }
  dots.forEach(v => {
    const x = ax.X(ax.fx(v)), y = ax.Y(ax.fy(profileAt(v)));
    add(ax.svg, 'rect', { x: x - 4, y: y - 4, width: 8, height: 8, fill: '#aeb4ff' });
    add(ax.svg, 'rect', { x: x - 2.500, y: y - 2.500, width: 5, height: 5, fill: '#1a2cff' });
  });
  ax.line(PROFILE.map(([v, y]) => [ax.fx(v), ax.fy(y)]), '#ff0000', 2.600);
});

// Figure 5: same profile against wavelength
plot('fig5', {
  box: [1390.5, 229, 2313, 1022], xlim: [1214, 1217], ylim: [0, 3],
  xticks: range(1214, 1217, .5), yticks: range(0, 3, .5),
  exp: { x: 1393, y: 223, text: '\u221213' },
}, ax => {
  ax.line(PROFILE.map(([v, y]) => [ax.fx(1215.6 + v / 246.8), ax.fy(y)]), BLUE);
});

// Figure 4: log scale
const F4 = [244, 1418, 1391, 310];
const f4Core = [[635, 905], [665, 815], [685, 760], [715, 650], [735, 590], [755, 525], [775, 487], [795, 473], [810, 473], [830, 490], [860, 530], [880, 533], [905, 510], [920, 487], [945, 473], [960, 473], [980, 505], [1000, 550], [1020, 625], [1040, 705]];
plot('fig4', {
  box: [2575, 227, 3416.5, 1020], xlim: [2.463, 2.469], ylim: [14, 17], log: true,
  xticks: range(2.463, 2.469, .001), xfmt: x => x.toFixed(3), yticks: [14, 15, 16, 17],
  minor: [14, 15, 16].flatMap(d => [2, 3, 4, 5, 6, 7, 8, 9].map(m => d + Math.log10(m))),
  exp: { x: 3335, y: 1100, text: '15' },
}, ax => {
  ax.line(trace([[340, 1201], [362, 1201], [388, 1173], [403, 1183], [418, 1163], [445, 1160], [475, 1130], [510, 1096], [565, 1097], [580, 1080], [600, 1030], [620, 960], ...f4Core, [1065, 790], [1085, 850], [1110, 900], [1150, 985], [1195, 1065], [1240, 1103], [1270, 1133], [1300, 1150], [1330, 1165], [1345, 1183], [1360, 1177], [1380, 1198], [1397, 1201]], F4), BLUE);
  ax.line(trace([[340, 1143], [362, 1143], [388, 1122], [403, 1132], [418, 1116], [450, 1112], [475, 1092], [510, 1066], [525, 1062], [555, 1068], [575, 1060], [590, 1035], [610, 990], ...f4Core, [1065, 780], [1090, 850], [1115, 905], [1150, 970], [1190, 1035], [1215, 1055], [1245, 1072], [1265, 1088], [1295, 1105], [1325, 1116], [1345, 1135], [1362, 1128], [1380, 1143], [1397, 1147]], F4), ORANGE);
  add(ax.svg, 'path', { d: `M${ax.X(trace([[340, 0]], F4)[0][0])} ${ax.Y(trace([[0, 1329]], F4)[0][1])}H${ax.X(trace([[708, 0]], F4)[0][0])}v2H${ax.X(trace([[1188, 0]], F4)[0][0])}v2H${ax.X(trace([[1397, 0]], F4)[0][0])}`, fill: 'none', stroke: YELLOW, 'stroke-width': 2 });
});

// Figure 6: flux over velocity and time. Rows of the table come from the transit cuts in figures 7 and 8.
const HEAT_T = [0, 2.27, 4.27, 6.27, 8.27, 10.27, 12.55];
const HEAT = [
  [2.64, 2.62, 2.2, 1.74, 1.55, 1.41, 1.65, 1.9, 2.35, 2.66, 2.62],
  [2.64, 2.58, 2.03, 1.46, 1.25, 1.21, 1.55, 2.02, 2.44, 2.66, 2.62],
  [2.64, 2.57, 1.5, .93, .79, .75, 1.09, 1.89, 2.43, 2.64, 2.62],
  [2.61, 2.43, 1.16, .66, .4, .33, .37, .72, 1.58, 2.3, 2.55],
  [2.64, 2.55, 2.25, 1.47, .89, .54, .45, .69, 1.39, 2.34, 2.59],
  [2.64, 2.62, 2.33, 2.03, 1.4, .93, .79, 1.08, 2.14, 2.62, 2.62],
  [2.64, 2.64, 2.33, 2.02, 1.6, 1.16, 1.05, 1.37, 2.2, 2.62, 2.62],
];
const PARULA = [
  [0, '#3c338c'], [.05, '#3f3a9c'], [.09, '#3348b8'], [.13, '#0d66dd'], [.22, '#0585d5'], [.3, '#06a4c8'], [.4, '#19b4aa'], [.5, '#55bb8e'], [.57, '#82bf7e'],
  [.66, '#b0bd6a'], [.75, '#e2b84c'], [.85, '#ffc039'], [.92, '#f9e12a'], [1, '#f9f90a'],
].map(([at, hex]) => [at, [1, 3, 5].map(i => parseInt(hex.slice(i, i + 2), 16))]);

const parula = f => {
  const t = Math.min(Math.max(f, 0), 1);
  let i = 1;
  while (PARULA[i][0] < t) i++;
  const a = PARULA[i - 1], b = PARULA[i], k = (t - a[0]) / (b[0] - a[0]);
  return `rgb(${a[1].map((c, n) => Math.round(c + (b[1][n] - c) * k)).join(',')})`;
};

const cubic = (p0, p1, p2, p3, k) => p1 + .5 * k * (p2 - p0 + k * (2 * p0 - 5 * p1 + 4 * p2 - p3 + k * (3 * (p1 - p2) + p3 - p0)));

// depression below the stellar profile, zero beyond the table's velocity columns
const depth = (col, row) => {
  if (col < 0 || col > 10) return 0;
  const r = Math.min(Math.max(row, 0), HEAT.length - 1);
  return Math.max(profileAt(-50 + col * 10) - HEAT[r][col], 0);
};

const heatAt = (v, t) => {
  let row = 0;
  while (row < HEAT_T.length - 2 && t > HEAT_T[row + 1]) row++;
  const kt = (t - HEAT_T[row]) / (HEAT_T[row + 1] - HEAT_T[row]);
  const cpos = (v + 50) / 10;
  const col = Math.floor(cpos), kv = cpos - col;
  const across = r => cubic(depth(col - 1, r), depth(col, r), depth(col + 1, r), depth(col + 2, r), kv);
  const d = cubic(across(row - 1), across(row), across(row + 1), across(row + 2), kt);
  return profileAt(v) - Math.max(d, 0);
};

plot('fig6', {
  box: [160, 1368, 1113.5, 2163], xlim: [-100, 100], ylim: [0, 12.55], heat: true,
  xticks: range(-100, 100, 50), yticks: range(0, 12, 2), xlabel: 'v (km/s)', ylabel: 'time (hrs)',
}, ax => {
  const COLS = 100, ROWS = 63;
  const cw = (ax.X(1) - ax.X(0)) / COLS, ch = (ax.Y(0) - ax.Y(1)) / ROWS;
  for (let r = 0; r < ROWS; r++) {
    for (let c = 0; c < COLS; c++) {
      const v = -100 + (c + .5) * 2, t = (r + .5) * 12.55 / ROWS;
      add(ax.svg, 'rect', {
        x: ax.X(c / COLS), y: ax.Y((r + 1) / ROWS), width: cw + .5, height: ch + .5,
        fill: parula((heatAt(v, t) - .3) / 2.4),
      });
    }
  }
});

// Figure 7: line profile at several times
const F7 = [239, 1378, 1419, 339];
const L = [[239, 1140], [290, 1030], [340, 880], [400, 710], [450, 570]];
const R = [[1170, 620], [1220, 770], [1270, 920], [1320, 1040], [1378, 1155]];
plot('fig7', {
  box: [1383, 1369, 2254.6, 2162.6], xlim: [-100, 100], ylim: [0, 3],
  xticks: range(-100, 100, 50), yticks: range(0, 3, .5), xlabel: 'v (km/s)',
  exp: { x: 1385, y: 1363, text: '\u221213' },
  legend: {
    box: [1970.6, 1935, 2237, 2132.5], line: [1986, 2066], textX: 2074,
    rows: [
      { y: 1955, color: BLUE, text: 'Stellar Profile' }, { y: 1987, color: ORANGE, text: 't=2.2684' },
      { y: 2019, color: YELLOW, text: 't=4.2684' }, { y: 2050, color: PURPLE, text: 't=6.2684' },
      { y: 2081, color: GREEN, text: 't=8.2684' }, { y: 2113, color: CYAN, text: 't=10.2684' },
    ],
  },
}, ax => {
  [
    [BLUE, [...L, [490, 495], [515, 465], [540, 453], [565, 462], [590, 490], [640, 580], [680, 650], [740, 730], [770, 752], [800, 765], [830, 757], [870, 720], [900, 680], [950, 605], [1000, 500], [1030, 465], [1050, 455], [1065, 453], [1095, 470], [1120, 510], ...R]],
    [ORANGE, [...L, [490, 495], [515, 467], [540, 458], [565, 468], [590, 505], [620, 590], [650, 750], [680, 860], [710, 925], [740, 960], [770, 982], [805, 984], [830, 975], [850, 940], [870, 880], [900, 740], [930, 630], [960, 555], [1000, 495], [1030, 462], [1060, 453], [1095, 470], [1120, 510], ...R]],
    [YELLOW, [...L, [500, 475], [525, 462], [550, 470], [575, 510], [600, 620], [625, 820], [650, 990], [680, 1065], [720, 1115], [760, 1143], [785, 1150], [815, 1140], [845, 1100], [870, 1010], [900, 850], [930, 700], [960, 590], [990, 520], [1020, 475], [1055, 455], [1090, 465], [1120, 510], ...R]],
    [PURPLE, [...L, [490, 500], [525, 480], [550, 495], [575, 570], [600, 720], [630, 920], [660, 1060], [690, 1170], [720, 1240], [760, 1285], [800, 1301], [830, 1300], [860, 1285], [890, 1240], [920, 1160], [950, 1020], [985, 830], [1020, 630], [1050, 550], [1090, 502], [1120, 515], ...R]],
    [GREEN, [...L, [490, 495], [515, 465], [545, 457], [575, 480], [610, 550], [650, 690], [690, 870], [720, 990], [750, 1090], [780, 1170], [810, 1225], [850, 1257], [880, 1245], [910, 1200], [940, 1110], [970, 960], [1000, 770], [1030, 570], [1060, 510], [1095, 485], [1130, 515], ...R]],
    [CYAN, [...L, [490, 495], [510, 462], [540, 452], [575, 470], [620, 530], [660, 600], [700, 700], [740, 860], [770, 985], [800, 1070], [830, 1125], [855, 1133], [885, 1105], [910, 1030], [940, 870], [970, 680], [1000, 550], [1030, 480], [1070, 460], [1100, 470], [1130, 515], ...R]],
  ].forEach(([color, pts]) => ax.line(trace(pts, F7), color));
});

// Figure 8: flux over time at fixed velocities
const F8 = [239, 1418, 1416, 339];
plot('fig8', {
  box: [2520.5, 1369, 3411, 2160], xlim: [0, 14], ylim: [0, 3],
  xticks: range(0, 14, 2), yticks: range(0, 3, .5), xlabel: 'time (hrs)',
  exp: { x: 2522, y: 1363, text: '\u221213' },
  legend: {
    box: [3112.5, 1973, 3391, 2139], line: [3129, 3208], textX: 3216,
    rows: [
      { y: 1993, color: BLUE, text: 'vel=\u221240 km/s' }, { y: 2025, color: ORANGE, text: 'vel=\u221220 km/s' },
      { y: 2055, color: YELLOW, text: 'vel=0 km/s' }, { y: 2087, color: PURPLE, text: 'vel=20 km/s' },
      { y: 2119, color: GREEN, text: 'vel=40 km/s' },
    ],
  },
}, ax => {
  [
    [BLUE, [[239, 477], [300, 482], [400, 493], [480, 500], [550, 513], [590, 528], [620, 545], [650, 580], [680, 598], [720, 606], [760, 605], [810, 590], [860, 560], [900, 520], [930, 485], [960, 468], [1000, 467], [1293, 467]]],
    [ORANGE, [[239, 793], [320, 817], [400, 865], [450, 910], [500, 965], [550, 1020], [600, 1090], [650, 1160], [690, 1195], [725, 1208], [760, 1190], [800, 1130], [840, 1030], [880, 930], [920, 830], [960, 745], [1000, 715], [1040, 695], [1080, 687], [1140, 684], [1200, 688], [1293, 690]]],
    [YELLOW, [[239, 912], [290, 918], [350, 935], [410, 965], [460, 1005], [500, 1040], [550, 1095], [600, 1155], [650, 1215], [700, 1268], [750, 1298], [800, 1308], [850, 1295], [910, 1245], [960, 1195], [1010, 1145], [1070, 1105], [1140, 1062], [1210, 1040], [1293, 1000]]],
    [PURPLE, [[239, 733], [290, 720], [340, 705], [400, 693], [460, 687], [510, 690], [545, 705], [580, 760], [630, 850], [680, 970], [720, 1070], [760, 1170], [790, 1220], [820, 1234], [860, 1215], [920, 1160], [970, 1095], [1030, 1035], [1090, 975], [1140, 945], [1200, 932], [1250, 929], [1293, 924]]],
    [GREEN, [[239, 462], [570, 462], [590, 465], [605, 472], [625, 497], [650, 530], [700, 585], [740, 625], [790, 660], [830, 680], [860, 680], [900, 640], [935, 590], [975, 555], [1020, 515], [1080, 487], [1150, 473], [1210, 469], [1293, 475]]],
  ].forEach(([color, pts]) => ax.line(trace(pts, F8), color));
});
```
